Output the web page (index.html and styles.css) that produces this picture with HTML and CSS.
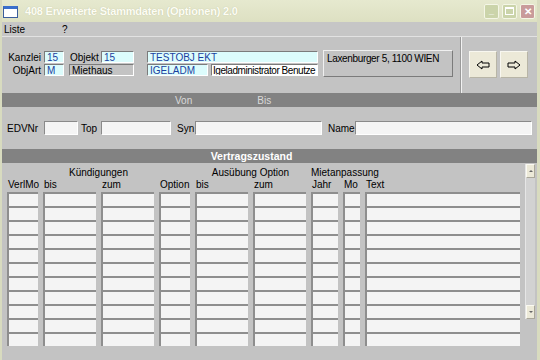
FILE: index.html
```html
<!DOCTYPE html>
<html>
<head>
    <title>408 Erweiterte Stammdaten (Optionen) 2.0</title>
    <link rel="stylesheet" href="styles.css">
</head>
<body>
<div class="window">
    <div class="titlebar">
        <span class="app-icon"></span>
        <span class="title">408 Erweiterte Stammdaten (Optionen) 2.0</span>
        <div class="winbtns">
            <span class="wbtn">_</span>
            <span class="wbtn"><span class="maxbox"></span></span>
            <span class="wbtn close">&#x2715;</span>
        </div>
    </div>

    <div class="menubar">
        <span class="menu-item">Liste</span>
        <span class="menu-item">?</span>
    </div>

    <div class="head">
        <div class="head-left">
            <div class="head-fields">
                <div class="frow">
                    <span class="lbl lbl-r">Kanzlei</span>
                    <span class="fld cyan w20">15</span>
                    <span class="lbl lbl-obj">Objekt</span>
                    <span class="fld cyan w33">15</span>
                    <span class="fld cyan w171 ml13">TESTOBJ EKT</span>
                </div>
                <div class="frow">
                    <span class="lbl lbl-r">ObjArt</span>
                    <span class="fld cyan w20">M</span>
                    <span class="fld grey w65 ml5">Miethaus</span>
                    <span class="fld cyan w61 ml13">IGELADM</span>
                    <span class="fld white w107 ml3 tight">Igeladministrator Benutze</span>
                </div>
            </div>
            <div class="addr">Laxenburger 5, 1100 WIEN</div>
        </div>
        <div class="head-right">
            <button class="nav">
                <svg width="14" height="10" viewBox="0 0 14 10"><path d="M1 5 L6 1 L6 3 L13 3 L13 7 L6 7 L6 9 Z" fill="none" stroke="#000" stroke-width="1"/></svg>
            </button>
            <button class="nav">
                <svg width="14" height="10" viewBox="0 0 14 10"><path d="M13 5 L8 1 L8 3 L1 3 L1 7 L8 7 L8 9 Z" fill="none" stroke="#000" stroke-width="1"/></svg>
            </button>
        </div>
    </div>

    <div class="darkbar">
        <span class="von">Von</span>
        <span class="bis">Bis</span>
    </div>

    <div class="search">
        <span class="slbl w-edv">EDVNr</span>
        <span class="sfld w34"></span>
        <span class="slbl w-top">Top</span>
        <span class="sfld w70"></span>
        <span class="slbl w-syn">Syn</span>
        <span class="sfld w127"></span>
        <span class="slbl w-name">Name</span>
        <span class="sfld w177"></span>
    </div>

    <div class="darkbar section-title">Vertragszustand</div>

    <div class="contract">
        <div class="table">
            <div class="cols hdr1">
                <span></span>
                <span class="span2 center">Kündigungen</span>
                <span></span>
                <span class="span2 center">Ausübung Option</span>
                <span class="span3">Mietanpassung</span>
            </div>
            <div class="cols hdr2">
                <span>VerlMo</span>
                <span>bis</span>
                <span>zum</span>
                <span>Option</span>
                <span>bis</span>
                <span>zum</span>
                <span>Jahr</span>
                <span>Mo</span>
                <span>Text</span>
            </div>
            <div class="cols rows" id="rows"></div>
        </div>
        <div class="scrollbar">
            <span class="sbtn"><span class="tri up"></span></span>
            <span class="sbtn"><span class="tri down"></span></span>
        </div>
    </div>
</div>

<script>
    // 11 empty rows with 9 cells each
    var rows = document.getElementById("rows");
    for (var i = 0; i < 11 * 9; i++) {
        var c = document.createElement("span");
        c.className = "cell";
        rows.appendChild(c);
    }
</script>
</body>
</html>
```

FILE: styles.css
```css
body {
    margin: 0;
    padding: 0;
    font-family: "Liberation Sans", Arial, sans-serif;
    font-size: 10px;
    color: #000;
    background-color: #c3c3c3;
}

.window {
    width: 540px;
    height: 360px;
    box-sizing: border-box;
    border-left: 2px solid #d8dbbf;
    border-right: 3px solid #d8dbbf;
    background-color: #c3c3c3;
    display: flex;
    flex-direction: column;
    overflow: hidden;
}

/* title bar */
.titlebar {
    height: 22px;
    flex: none;
    display: flex;
    align-items: center;
    background: linear-gradient(#e6e9cf, #dde0c2);
    margin-left: -2px;
    margin-right: -3px;
    padding-left: 3px;
}

.app-icon {
    width: 13px;
    height: 8px;
    border: 1px solid #3a5d9c;
    border-top: 3px solid #3a6fcc;
    background-color: #fff;
    margin-top: 1px;
}

.title {
    margin-left: 7px;
    color: #fdfdf4;
    font-size: 11px;
    font-weight: bold;
    text-shadow: 0 0 1px #b9bc9d;
    letter-spacing: -0.2px;
}

.winbtns {
    margin-left: auto;
    margin-right: 5px;
    display: flex;
    gap: 3px;
}

.wbtn {
    width: 13px;
    height: 13px;
    border: 1px solid #f4f6e6;
    border-radius: 2px;
    background-color: #cbd4aa;
    color: #fff;
    font-size: 9px;
    font-weight: bold;
    line-height: 11px;
    text-align: center;
    display: flex;
    align-items: center;
    justify-content: center;
}

.maxbox {
    width: 7px;
    height: 5px;
    border: 1px solid #fff;
    border-top-width: 2px;
}

.wbtn.close {
    background-color: #c99b9b;
    font-size: 10px;
}

/* menu */
.menubar {
    height: 14px;
    flex: none;
    background-color: #c6c6c6;
    border-bottom: 1px solid #e2e2e2;
    display: flex;
    align-items: center;
}

.menu-item {
    padding-left: 2px;
    width: 56px;
}

/* header with object data */
.head {
    height: 56px;
    flex: none;
    display: flex;
}

.head-left {
    width: 459px;
    border-right: 1px solid #9a9a9a;
    display: flex;
    align-items: flex-start;
    padding-top: 14px;
    box-sizing: border-box;
}

.head-fields {
    display: flex;
    flex-direction: column;
    gap: 1px;
}

.frow {
    display: flex;
    align-items: center;
    height: 12px;
}

.lbl-r {
    width: 39px;
    text-align: right;
    margin-right: 3px;
}

.lbl-obj {
    width: 31px;
    margin-left: 6px;
}

.fld {
    height: 12px;
    box-sizing: border-box;
    line-height: 11px;
    padding-left: 2px;
    white-space: nowrap;
    overflow: hidden;
    border-top: 1px solid #7b7b7b;
    border-left: 1px solid #7b7b7b;
    border-bottom: 1px solid #fff;
    border-right: 1px solid #fff;
}

.tight {
    letter-spacing: -0.45px;
    padding-left: 1px;
}

.cyan {
    background-color: #dcfcfc;
    color: #1a3f9f;
}

.grey {
    background-color: #c3c3c3;
}

.white {
    background-color: #fff;
}

.w20 { width: 20px; }
.w33 { width: 33px; }
.w171 { width: 171px; }
.w65 { width: 65px; }
.w61 { width: 61px; }
.w107 { width: 107px; }
.ml3 { margin-left: 3px; }
.ml5 { margin-left: 5px; }
.ml13 { margin-left: 13px; }

.addr {
    margin-left: 5px;
    width: 130px;
    height: 27px;
    box-sizing: border-box;
    margin-top: -1px;
    padding: 2px 3px;
    white-space: nowrap;
    letter-spacing: -0.35px;
    background-color: #c3c3c3;
    border-top: 1px solid #f0f0f0;
    border-left: 1px solid #f0f0f0;
    border-right: 1px solid #7b7b7b;
    border-bottom: 1px solid #7b7b7b;
}

.head-right {
    flex: 1;
    border-left: 1px solid #f2f2f2;
    display: flex;
    gap: 3px;
    padding-left: 7px;
    padding-top: 14px;
    align-items: flex-start;
}

.nav {
    width: 28px;
    height: 27px;
    padding: 0;
    background-color: #ece9d8;
    border: 1px solid #f8f7f0;
    border-right-color: #b8b5a6;
    border-bottom-color: #b8b5a6;
    display: flex;
    align-items: center;
    justify-content: center;
}

/* dark bars */
.darkbar {
    height: 14px;
    flex: none;
    background-color: #828282;
    color: #dadada;
    display: flex;
    align-items: center;
}

.von {
    margin-left: 173px;
}

.bis {
    margin-left: 65px;
}

.section-title {
    justify-content: center;
    color: #fff;
    font-weight: bold;
    font-size: 10.5px;
    padding-right: 36px;
}

/* search row */
.search {
    height: 42px;
    flex: none;
    display: flex;
    align-items: center;
    padding-left: 5px;
}

.slbl {
    flex: none;
}

.w-edv { width: 37px; }
.w-top { width: 20px; margin-left: 3px; }
.w-syn { width: 18px; margin-left: 6px; }
.w-name { width: 27px; margin-left: 6px; }

.sfld {
    height: 14px;
    box-sizing: border-box;
    background-color: #f5f5f5;
    border-top: 1px solid #8a8a8a;
    border-left: 1px solid #8a8a8a;
    border-bottom: 1px solid #fff;
    border-right: 1px solid #fff;
}

.w34 { width: 34px; }
.w70 { width: 70px; }
.w127 { width: 127px; }
.w177 { width: 177px; }

/* contract table */
.contract {
    display: flex;
    flex: 1;
}

.table {
    padding-left: 5px;
    padding-top: 3px;
}

.cols {
    display: grid;
    grid-template-columns: 31px 53px 53px 31px 53px 53px 27px 17px 155px;
    column-gap: 5px;
}

.hdr1 {
    height: 12px;
    align-items: center;
}

.hdr2 {
    height: 13px;
    align-items: center;
}

.hdr2 span {
    padding-left: 1px;
}

.span2 {
    grid-column: span 2;
}

.span3 {
    grid-column: span 3;
}

.center {
    text-align: center;
}

.rows {
    margin-top: 1px;
}

.cell {
    height: 14px;
    box-sizing: border-box;
    background-color: #f4f4f4;
    border-top: 2px solid #8e8e8e;
    border-left: 2px solid #8e8e8e;
}

.scrollbar {
    margin-left: 5px;
    margin-top: 1px;
    width: 10px;
    height: 155px;
    box-sizing: border-box;
    background-color: #d2d2d2;
    border-left: 1px solid #e6e6e6;
    display: flex;
    flex-direction: column;
    justify-content: space-between;
}

.sbtn {
    height: 12px;
    background-color: #ece9d8;
    border: 1px solid #fbfaf2;
    border-right-color: #aaa79a;
    border-bottom-color: #aaa79a;
    display: flex;
    align-items: center;
    justify-content: center;
}

.tri {
    width: 0;
    height: 0;
    border-left: 2px solid transparent;
    border-right: 2px solid transparent;
}

.tri.up {
    border-bottom: 2px solid #666;
}

.tri.down {
    border-top: 2px solid #666;
}
```
